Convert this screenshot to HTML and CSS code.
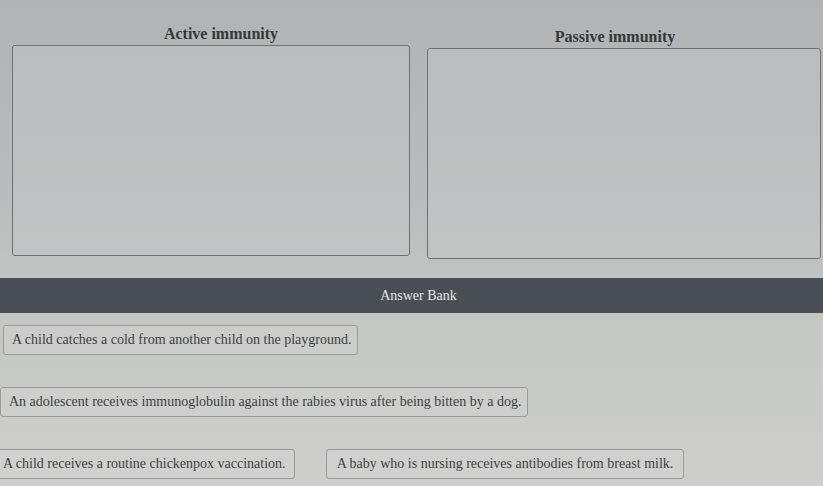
FILE: index.html
```html
<!DOCTYPE html>
<html lang="en">
<head>
<meta charset="utf-8">
<title>Active and passive immunity</title>
<link rel="stylesheet" href="styles.css">
</head>
<body>
<main class="page">
  <section class="targets">
    <div class="target target-left">
      <h2 class="target-title">Active immunity</h2>
      <div class="drop-zone"></div>
    </div>
    <div class="target target-right">
      <h2 class="target-title">Passive immunity</h2>
      <div class="drop-zone"></div>
    </div>
  </section>

  <section class="bank">
    <header class="bank-header">Answer Bank</header>
    <div class="bank-rows">
      <div class="bank-row row-1">
        <div class="chip">A child catches a cold from another child on the playground.</div>
      </div>
      <div class="bank-row row-2">
        <div class="chip">An adolescent receives immunoglobulin against the rabies virus after being bitten by a dog.</div>
      </div>
      <div class="bank-row row-3">
        <div class="chip">A child receives a routine chickenpox vaccination.</div>
        <div class="chip">A baby who is nursing receives antibodies from breast milk.</div>
      </div>
    </div>
  </section>
</main>
</body>
</html>
```

FILE: styles.css
```css
html, body {
  margin: 0;
  padding: 0;
}

body {
  width: 823px;
  height: 486px;
  overflow: hidden;
  font-family: "Liberation Serif", "Times New Roman", serif;
  color: #3a3c3e;
  background: linear-gradient(180deg, #b1b4b4 0%, #b9bcbc 40%, #c5c7c5 65%, #cecfcc 100%);
}

.page {
  display: flex;
  flex-direction: column;
}

/* two drop targets */
.targets {
  display: grid;
  grid-template-columns: 398px 394px;
  column-gap: 17px;
  padding: 25px 0 0 12px;
}

.target {
  display: flex;
  flex-direction: column;
  align-items: center;
}

.target-left .target-title {
  padding-left: 20px;
}

.target-right {
  padding-top: 3px;
}

.target-right .target-title {
  padding-right: 18px;
}

.target-title {
  margin: 0 0 3px;
  font-size: 16px;
  font-weight: bold;
  line-height: 17px;
  color: #35383a;
}

.drop-zone {
  align-self: stretch;
  height: 209px;
  border: 1.5px solid #6f7273;
  border-radius: 3px;
  background: rgba(200, 203, 202, 0.35);
}

/* answer bank */
.bank {
  margin-top: 19px;
}

.bank-header {
  height: 35px;
  line-height: 35px;
  background: #4a4f55;
  color: #e4e6e6;
  font-size: 14px;
  text-align: center;
  padding-left: 14px;
}

.bank-rows {
  display: flex;
  flex-direction: column;
  gap: 32px;
  padding-top: 12px;
}

.bank-row {
  display: flex;
  gap: 31px;
}

.row-1 {
  padding-left: 3px;
}

.row-3 {
  margin-left: -3px;
}

.chip {
  border: 1px solid #9a9c9c;
  border-radius: 3px;
  padding: 0 6px 0 8px;
  height: 28px;
  line-height: 28px;
  font-size: 14px;
  color: #3d3f41;
  background: rgba(215, 216, 212, 0.35);
  white-space: nowrap;
}

.row-3 .chip:first-child {
  padding: 0 8px 0 5px;
}

.row-3 .chip:last-child {
  padding: 0 10px 0 10px;
}
```
